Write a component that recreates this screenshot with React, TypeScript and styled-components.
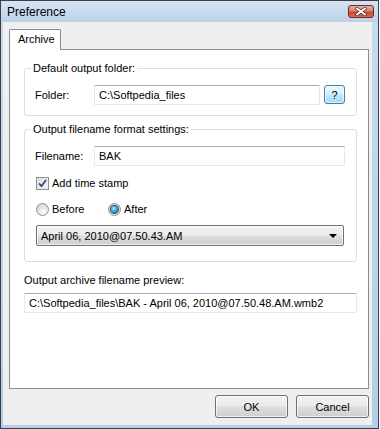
import React from 'react';
import styled, { createGlobalStyle } from 'styled-components';

const GlobalStyle = createGlobalStyle`
  body {
    margin: 0;
    background: #ffffff;
    font-family: "Liberation Sans", Arial, sans-serif;
    font-size: 11px;
    color: #000;
  }
`;

const Window = styled.div`
  box-sizing: border-box;
  width: 379px;
  height: 429px;
  border: 1px solid #3a3d42;
  background: linear-gradient(180deg, #c7dbef 0%, #b4cde8 100%);
  display: flex;
  flex-direction: column;
`;

const TitleBar = styled.div`
  height: 21px;
  display: flex;
  align-items: center;
  justify-content: space-between;
  padding: 0 4px 0 6px;
  background: linear-gradient(180deg, #d5e3f2 0%, #bcd2ea 100%);
  font-size: 12px;
  color: #000;
`;

const CloseButton = styled.div`
  box-sizing: border-box;
  width: 26px;
  height: 13px;
  border: 1px solid #6b2a24;
  border-radius: 3px;
  background: linear-gradient(180deg, #eab2a3 0%, #d9826b 45%, #c24b31 55%, #d46b50 100%);
  display: flex;
  align-items: center;
  justify-content: center;
`;

const Client = styled.div`
  box-sizing: border-box;
  width: 369px;
  height: 403px;
  margin-left: 2px;
  background: #efefef;
  padding: 7px 0 0 6px;
  display: flex;
  flex-direction: column;
`;

const TabStrip = styled.div`
  display: flex;
  position: relative;
  z-index: 1;
  margin-bottom: -1px;
`;

const Tab = styled.div`
  box-sizing: border-box;
  height: 21px;
  padding: 3px 8px 0 8px;
  background: #ffffff;
  border: 1px solid #898c95;
  border-bottom: none;
  border-radius: 2px 2px 0 0;
  width: 52px;
`;

const Panel = styled.div`
  box-sizing: border-box;
  width: 360px;
  height: 340px;
  background: #ffffff;
  border: 1px solid #898c95;
  padding: 18px 10px 0 14px;
  display: flex;
  flex-direction: column;
`;

const GroupBox = styled.div<{ $top?: number }>`
  position: relative;
  box-sizing: border-box;
  width: 333px;
  border: 1px solid #d5dfe5;
  border-radius: 3px;
  padding: 16px 11px 0 10px;
  margin-top: ${(p) => p.$top ?? 0}px;
  display: flex;
  flex-direction: column;
`;

const Legend = styled.span`
  position: absolute;
  top: -8px;
  left: 6px;
  padding: 0 2px;
  background: #ffffff;
  line-height: 14px;
`;

const FieldRow = styled.div<{ $bottom?: number }>`
  display: flex;
  align-items: center;
  margin-bottom: ${(p) => p.$bottom ?? 0}px;
`;

const FieldLabel = styled.span`
  width: 59px;
  flex-shrink: 0;
`;

const TextBox = styled.div<{ $width?: number }>`
  box-sizing: border-box;
  height: 20px;
  ${(p) => (p.$width ? `width: ${p.$width}px;` : 'flex: 1;')}
  border: 1px solid #e3e9ef;
  border-top-color: #abadb3;
  background: #ffffff;
  padding: 0 4px;
  display: flex;
  align-items: center;
  white-space: nowrap;
  overflow: hidden;
`;

const HelpButton = styled.div`
  box-sizing: border-box;
  width: 21px;
  height: 19px;
  margin-left: 4px;
  margin-top: -1px;
  border: 1px solid #3c7fb1;
  border-radius: 3px;
  background: linear-gradient(180deg, #eaf6fd 0%, #d9f0fc 45%, #bee6fd 55%, #a7d9f5 100%);
  box-shadow: inset 0 0 0 1px rgba(255, 255, 255, 0.6);
  display: flex;
  align-items: center;
  justify-content: center;
`;

const OptionRow = styled.div<{ $bottom?: number }>`
  display: flex;
  align-items: center;
  height: 16px;
  padding-left: 1px;
  margin-bottom: ${(p) => p.$bottom ?? 0}px;
`;

const Option = styled.label<{ $width?: number }>`
  display: flex;
  align-items: center;
  gap: 3px;
  ${(p) => (p.$width ? `width: ${p.$width}px;` : '')}
`;

const CheckBox = styled.span`
  box-sizing: border-box;
  width: 13px;
  height: 13px;
  border: 1px solid #8e8f8f;
  background: linear-gradient(135deg, #dcdcdc 0%, #f6f6f6 100%);
  display: flex;
  align-items: center;
  justify-content: center;
`;

const Radio = styled.span<{ $checked?: boolean }>`
  box-sizing: border-box;
  width: 13px;
  height: 13px;
  border-radius: 50%;
  border: 1px solid #8e8f8f;
  background: radial-gradient(circle at 60% 70%, #ffffff 0%, #e4e4e4 50%, #c9c9c9 100%);
  display: flex;
  align-items: center;
  justify-content: center;

  &::after {
    content: '';
    display: ${(p) => (p.$checked ? 'block' : 'none')};
    width: 7px;
    height: 7px;
    border-radius: 50%;
    background: radial-gradient(circle at 40% 35%, #a9ecff 0%, #3ca5dc 45%, #0d4c80 100%);
    box-shadow: 0 0 0 1px #26425f;
  }
`;

const ComboBox = styled.div`
  box-sizing: border-box;
  width: 308px;
  height: 21px;
  margin-left: 1px;
  border: 1px solid #707070;
  border-radius: 2px;
  background: linear-gradient(180deg, #f2f2f2 0%, #ebebeb 45%, #dddddd 55%, #cfcfcf 100%);
  box-shadow: inset 0 0 0 1px rgba(255, 255, 255, 0.7);
  padding: 0 6px 0 4px;
  display: flex;
  align-items: center;
  justify-content: space-between;
`;

const Arrow = styled.span`
  width: 0;
  height: 0;
  border-left: 4px solid transparent;
  border-right: 4px solid transparent;
  border-top: 4px solid #000;
`;

const PreviewLabel = styled.div`
  line-height: 14px;
  margin: 11px 0 6px 0;
`;

const ButtonBar = styled.div`
  display: flex;
  justify-content: flex-end;
  gap: 8px;
  margin-top: 6px;
  width: 360px;
`;

const PushButton = styled.div`
  box-sizing: border-box;
  width: 73px;
  height: 23px;
  border: 1px solid #707070;
  border-radius: 3px;
  background: linear-gradient(180deg, #f2f2f2 0%, #ebebeb 45%, #dddddd 55%, #cfcfcf 100%);
  box-shadow: inset 0 0 0 1px rgba(255, 255, 255, 0.7);
  display: flex;
  align-items: center;
  justify-content: center;
`;

const App: React.FC = () => {
  return (
    <>
      <GlobalStyle />
      <Window>
        <TitleBar>
          <span>Preference</span>
          <CloseButton>
            <svg width="12" height="9" viewBox="0 0 12 9">
              <path d="M2 1.5 L10 7.5 M10 1.5 L2 7.5" stroke="#4d2a26" strokeWidth="3.4" strokeLinecap="round" />
              <path d="M2 1.5 L10 7.5 M10 1.5 L2 7.5" stroke="#ffffff" strokeWidth="2" strokeLinecap="round" />
            </svg>
          </CloseButton>
        </TitleBar>

        <Client>
          <TabStrip>
            <Tab>Archive</Tab>
          </TabStrip>

          <Panel>
            <GroupBox>
              <Legend>Default output folder:</Legend>
              <FieldRow $bottom={10}>
                <FieldLabel>Folder:</FieldLabel>
                <TextBox>C:\Softpedia_files</TextBox>
                <HelpButton>?</HelpButton>
              </FieldRow>
            </GroupBox>

            <GroupBox $top={13}>
              <Legend>Output filename format settings:</Legend>
              <FieldRow $bottom={9}>
                <FieldLabel>Filename:</FieldLabel>
                <TextBox>BAK</TextBox>
              </FieldRow>
              <OptionRow $bottom={10}>
                <Option>
                  <CheckBox>
                    <svg width="9" height="9" viewBox="0 0 9 9">
                      <path d="M1 4.5 L3.5 7.2 L8 1" fill="none" stroke="#33467e" strokeWidth="1.8" />
                    </svg>
                  </CheckBox>
                  Add time stamp
                </Option>
              </OptionRow>
              <OptionRow $bottom={8}>
                <Option $width={72}>
                  <Radio />
                  Before
                </Option>
                <Option>
                  <Radio $checked />
                  After
                </Option>
              </OptionRow>
              <FieldRow $bottom={15}>
                <ComboBox>
                  <span>April 06, 2010@07.50.43.AM</span>
                  <Arrow />
                </ComboBox>
              </FieldRow>
            </GroupBox>

            <PreviewLabel>Output archive filename preview:</PreviewLabel>
            <TextBox $width={333}>C:\Softpedia_files\BAK - April 06, 2010@07.50.48.AM.wmb2</TextBox>
          </Panel>

          <ButtonBar>
            <PushButton>OK</PushButton>
            <PushButton>Cancel</PushButton>
          </ButtonBar>
        </Client>
      </Window>
    </>
  );
};

export default App;
